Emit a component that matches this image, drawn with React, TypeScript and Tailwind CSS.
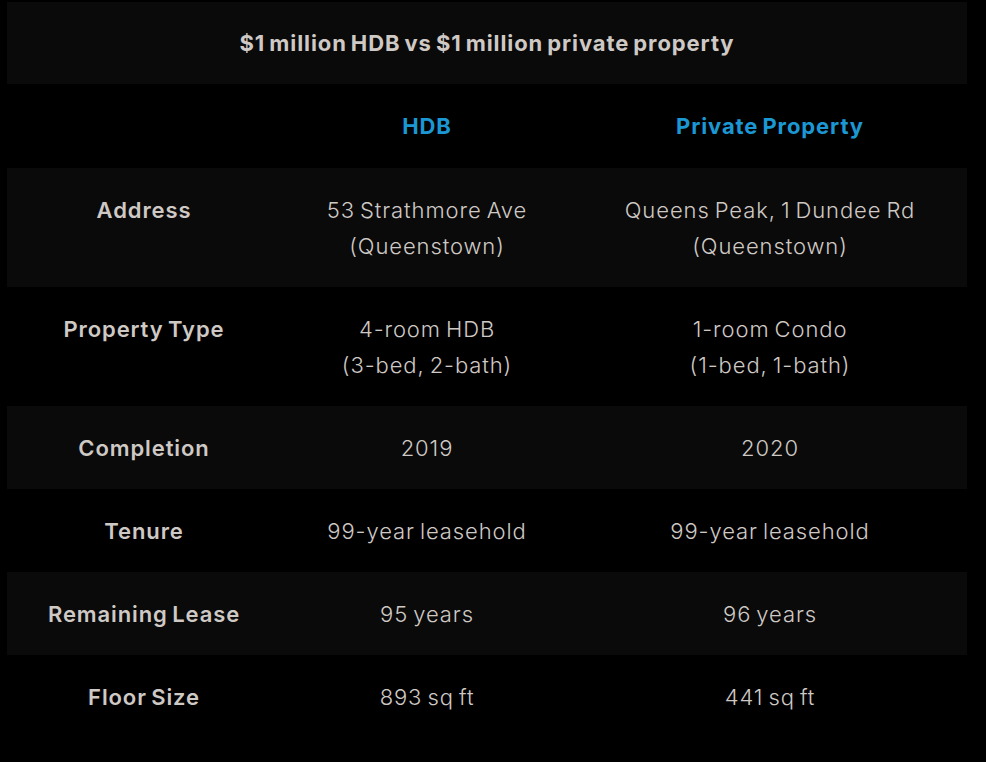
import React from 'react';

type Row = { label: string; hdb: string[]; pvt: string[] };

const rows: Row[] = [
  { label: 'Address', hdb: ['53 Strathmore Ave', '(Queenstown)'], pvt: ['Queens Peak, 1 Dundee Rd', '(Queenstown)'] },
  { label: 'Property Type', hdb: ['4-room HDB', '(3-bed, 2-bath)'], pvt: ['1-room Condo', '(1-bed, 1-bath)'] },
  { label: 'Completion', hdb: ['2019'], pvt: ['2020'] },
  { label: 'Tenure', hdb: ['99-year leasehold'], pvt: ['99-year leasehold'] },
  { label: 'Remaining Lease', hdb: ['95 years'], pvt: ['96 years'] },
  { label: 'Floor Size', hdb: ['893 sq ft'], pvt: ['441 sq ft'] },
];

const Lines = ({ lines }: { lines: string[] }) => (
  <>
    {lines.map((l, i) => (
      <div key={i}>{l}</div>
    ))}
  </>
);

const App: React.FC = () => {
  return (
    <div className="min-h-screen w-full bg-black pt-[2px] pl-[7px] font-['Inter',sans-serif] text-[#cfc9c5]">
      <table className="w-[960px] border-collapse text-center text-[22px] leading-[36px] tracking-[0.9px] [word-spacing:-2px]">
        <colgroup>
          <col className="w-[274px]" />
          <col className="w-[292px]" />
          <col className="w-[394px]" />
        </colgroup>
        <thead>
          <tr className="h-[82px] bg-[#0a0a0a]">
            <th colSpan={3} className="font-bold">
              $1 million HDB vs $1 million private property
            </th>
          </tr>
          <tr className="h-[84px]">
            <th />
            <th className="font-bold text-[#1b98d4]">HDB</th>
            <th className="font-bold text-[#1b98d4]">Private Property</th>
          </tr>
        </thead>
        <tbody>
          {rows.map((r, i) => (
            <tr key={r.label} className={i % 2 === 0 ? 'bg-[#0a0a0a]' : 'bg-black'}>
              <td className="pt-[24px] pb-[23px] align-top font-semibold">{r.label}</td>
              <td className="pt-[24px] pb-[23px] align-top font-light">
                <Lines lines={r.hdb} />
              </td>
              <td className="pt-[24px] pb-[23px] align-top font-light">
                <Lines lines={r.pvt} />
              </td>
            </tr>
          ))}
        </tbody>
      </table>
    </div>
  );
};

export default App;
